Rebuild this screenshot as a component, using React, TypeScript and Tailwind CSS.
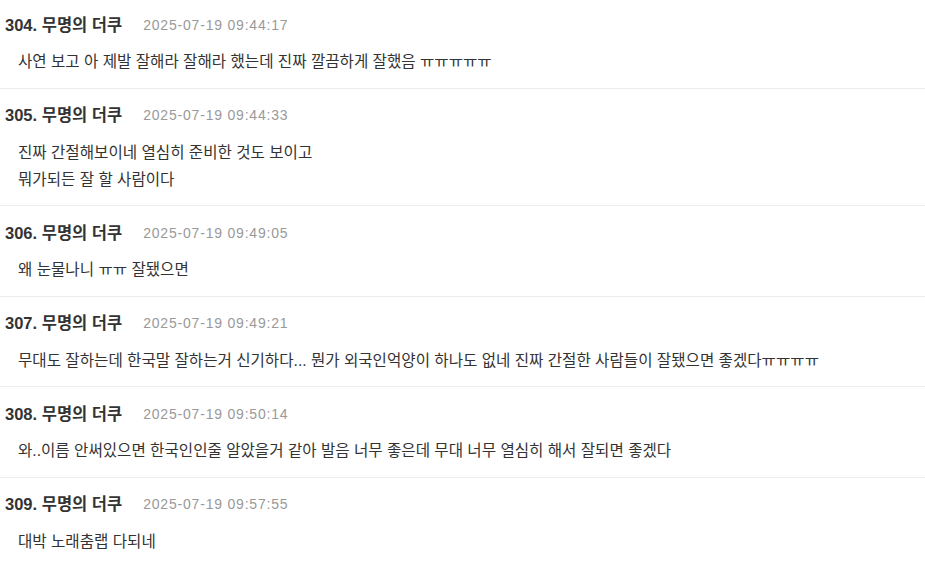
import React from "react";

interface Comment {
  no: number;
  name: string;
  date: string;
  lines: string[];
}

const comments: Comment[] = [
  {
    no: 304,
    name: "무명의 더쿠",
    date: "2025-07-19 09:44:17",
    lines: ["사연 보고 아 제발 잘해라 잘해라 했는데 진짜 깔끔하게 잘했음 ㅠㅠㅠㅠㅠ"],
  },
  {
    no: 305,
    name: "무명의 더쿠",
    date: "2025-07-19 09:44:33",
    lines: ["진짜 간절해보이네 열심히 준비한 것도 보이고", "뭐가되든 잘 할 사람이다"],
  },
  {
    no: 306,
    name: "무명의 더쿠",
    date: "2025-07-19 09:49:05",
    lines: ["왜 눈물나니 ㅠㅠ 잘됐으면"],
  },
  {
    no: 307,
    name: "무명의 더쿠",
    date: "2025-07-19 09:49:21",
    lines: [
      "무대도 잘하는데 한국말 잘하는거 신기하다... 뭔가 외국인억양이 하나도 없네 진짜 간절한 사람들이 잘됐으면 좋겠다ㅠㅠㅠㅠ",
    ],
  },
  {
    no: 308,
    name: "무명의 더쿠",
    date: "2025-07-19 09:50:14",
    lines: [
      "와..이름 안써있으면 한국인인줄 알았을거 같아 발음 너무 좋은데 무대 너무 열심히 해서 잘되면 좋겠다",
    ],
  },
  {
    no: 309,
    name: "무명의 더쿠",
    date: "2025-07-19 09:57:55",
    lines: ["대박 노래춤랩 다되네"],
  },
];

const App: React.FC = () => {
  return (
    <div
      className="w-[925px] h-[566px] overflow-hidden bg-white text-[#333]"
      style={{ fontFamily: '"Liberation Sans", "Noto Sans CJK KR", sans-serif' }}
    >
      <ul className="-mt-[2px]">
        {comments.map((c) => (
          <li key={c.no} className="border-b border-[#ececec] pt-[17px] pb-[12.5px]">
            <div className="flex items-center h-[20px] pl-[5px]">
              <span className="text-[16.5px] font-bold text-[#333]">
                {c.no}. {c.name}
              </span>
              <span className="ml-[21px] text-[14px] text-[#999] tracking-[0.8px]">{c.date}</span>
            </div>
            <div className="mt-[13px] pl-[18px] text-[15.6px] leading-[27px] text-[#333]">
              {c.lines.map((l, i) => (
                <p key={i}>{l}</p>
              ))}
            </div>
          </li>
        ))}
      </ul>
    </div>
  );
};

export default App;
